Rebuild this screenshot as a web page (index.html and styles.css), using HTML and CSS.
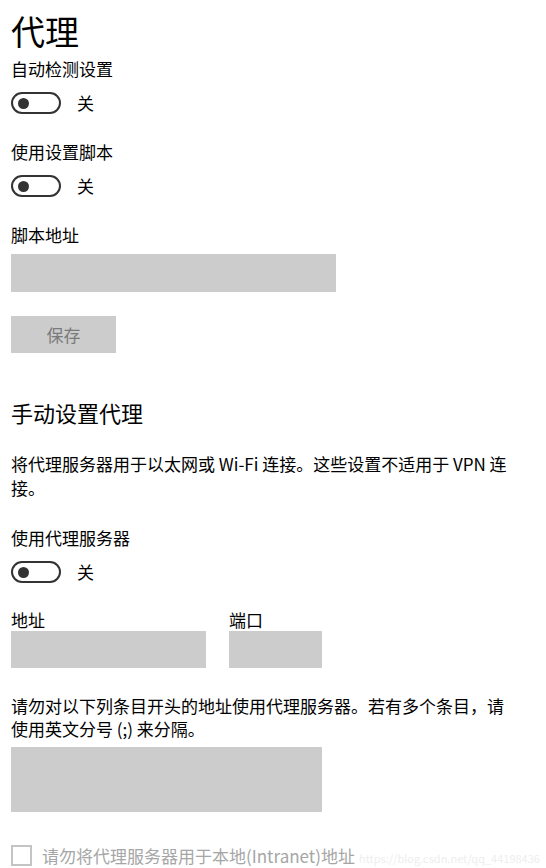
FILE: index.html
```html
<!DOCTYPE html>
<html lang="zh-CN">
<head>
<meta charset="UTF-8">
<meta name="viewport" content="width=device-width, initial-scale=1.0">
<title>代理</title>
<link rel="stylesheet" href="styles.css">
</head>
<body>
<div class="page">
    <h1 class="title">代理</h1>

    <div class="label first">自动检测设置</div>
    <div class="switch-row">
        <span class="switch"><span class="knob"></span></span>
        <span class="switch-text">关</span>
    </div>

    <div class="label">使用设置脚本</div>
    <div class="switch-row">
        <span class="switch"><span class="knob"></span></span>
        <span class="switch-text">关</span>
    </div>

    <div class="label">脚本地址</div>
    <div class="input script-input"></div>
    <button class="save-btn" disabled>保存</button>

    <h2 class="section-title">手动设置代理</h2>
    <p class="desc">将代理服务器用于以太网或 Wi-Fi 连接。这些设置不适用于 VPN 连接。</p>

    <div class="label">使用代理服务器</div>
    <div class="switch-row">
        <span class="switch"><span class="knob"></span></span>
        <span class="switch-text">关</span>
    </div>

    <div class="fields">
        <div class="field">
            <div class="field-label">地址</div>
            <div class="input addr-input"></div>
        </div>
        <div class="field">
            <div class="field-label">端口</div>
            <div class="input port-input"></div>
        </div>
    </div>

    <p class="desc exceptions">请勿对以下列条目开头的地址使用代理服务器。若有多个条目，请使用英文分号 (;) 来分隔。</p>
    <div class="input textarea"></div>

    <div class="check-row">
        <span class="checkbox"></span>
        <span class="check-text">请勿将代理服务器用于本地(Intranet)地址</span>
        <span class="watermark">https://blog.csdn.net/qq_44198436</span>
    </div>
</div>
</body>
</html>
```

FILE: styles.css
```css
body {
    margin: 0;
    background-color: #fff;
    color: #000;
    font-family: "Noto Sans CJK SC", "Noto Sans", sans-serif;
    overflow: hidden;
}

.page {
    padding: 11px 0 0 11px;
}

.title {
    margin: 0;
    font-size: 34px;
    font-weight: normal;
    line-height: 40px;
}

.label {
    font-size: 17px;
    line-height: 24px;
    margin-top: 26px;
}

.label.first {
    margin-top: 6px;
}

.switch-row {
    display: flex;
    align-items: center;
    height: 22px;
    margin-top: 11px;
}

.switch {
    display: flex;
    align-items: center;
    box-sizing: border-box;
    width: 50px;
    height: 22px;
    border: 2px solid #333;
    border-radius: 11px;
    padding-left: 5px;
}

.knob {
    width: 11px;
    height: 11px;
    border-radius: 50%;
    background-color: #333;
}

.switch-text {
    margin-left: 16px;
    font-size: 17px;
    line-height: 22px;
}

.input {
    background-color: #cccccc;
}

.script-input {
    width: 325px;
    height: 38px;
    margin-top: 7px;
}

.save-btn {
    display: block;
    width: 105px;
    height: 37px;
    margin-top: 24px;
    border: none;
    background-color: #cccccc;
    color: #7a7a7a;
    font-family: inherit;
    font-size: 17px;
    padding: 0;
}

.section-title {
    margin: 44px 0 0;
    font-size: 22px;
    font-weight: normal;
    line-height: 30px;
}

.desc {
    margin: 25px 0 0;
    width: 497px;
    font-size: 17px;
    line-height: 24px;
}

.fields {
    display: flex;
    gap: 23px;
    margin-top: 25px;
}

.field-label {
    font-size: 17px;
    line-height: 23px;
}

.addr-input {
    width: 195px;
    height: 37px;
}

.port-input {
    width: 93px;
    height: 37px;
}

.desc.exceptions {
    margin-top: 26px;
    line-height: 23px;
}

.textarea {
    width: 311px;
    height: 65px;
    margin-top: 7px;
}

.check-row {
    display: flex;
    align-items: center;
    height: 22px;
    margin-top: 32px;
    position: relative;
}

.checkbox {
    box-sizing: border-box;
    width: 21px;
    height: 21px;
    border: 2px solid #c4c4c4;
}

.check-text {
    margin-left: 10px;
    font-size: 17px;
    color: #a6a6a6;
    white-space: nowrap;
}

.watermark {
    position: absolute;
    left: 348px;
    top: 6px;
    font-size: 11px;
    color: #eeeeee;
    white-space: nowrap;
}
```
